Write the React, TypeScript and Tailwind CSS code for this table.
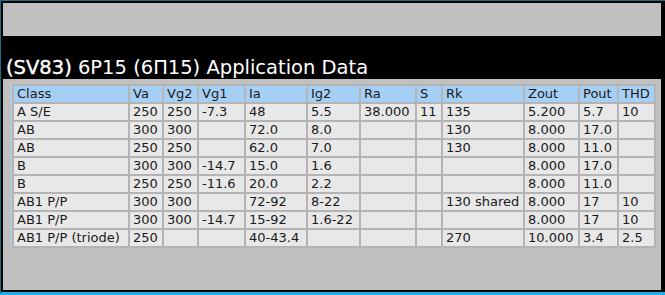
const rows: string[][] = [
  ["A S/E", "250", "250", "-7.3", "48", "5.5", "38.000", "11", "135", "5.200", "5.7", "10"],
  ["AB", "300", "300", "", "72.0", "8.0", "", "", "130", "8.000", "17.0", ""],
  ["AB", "250", "250", "", "62.0", "7.0", "", "", "130", "8.000", "11.0", ""],
  ["B", "300", "300", "-14.7", "15.0", "1.6", "", "", "", "8.000", "17.0", ""],
  ["B", "250", "250", "-11.6", "20.0", "2.2", "", "", "", "8.000", "11.0", ""],
  ["AB1 P/P", "300", "300", "", "72-92", "8-22", "", "", "130 shared", "8.000", "17", "10"],
  ["AB1 P/P", "300", "300", "-14.7", "15-92", "1.6-22", "", "", "", "8.000", "17", "10"],
  ["AB1 P/P (triode)", "250", "", "", "40-43.4", "", "", "", "270", "10.000", "3.4", "2.5"],
];

const headers = ["Class", "Va", "Vg2", "Vg1", "Ia", "Ig2", "Ra", "S", "Rk", "Zout", "Pout", "THD"];
const widths = ["w-[114px]", "w-[32px]", "w-[33px]", "w-[45px]", "w-[60px]", "w-[51px]", "w-[54px]", "w-[24px]", "w-[80px]", "w-[53px]", "w-[37px]", "w-[35px]"];

export default function App() {
  return (
    <div className="w-[665px] h-[295px] bg-black border-l border-t border-b-[3px] border-l-[#1b6c86] border-t-[#1b6c86] border-b-[#1cb0e4] pt-[2px] pl-[2px] pr-[4px] pb-[2px] font-['DejaVu_Sans',sans-serif]">
      <div className="h-full bg-[#c0c0c0] flex flex-col">
        <div className="h-[33px]" />
        <div className="h-[43px] bg-black text-white text-[19.5px] leading-none flex items-end pl-[3px] pb-[2px] whitespace-nowrap">
          <span className="[-webkit-text-stroke:0.4px_white]">(SV83)</span>
          <span>&nbsp;6P15 (6П15) Application Data</span>
        </div>
        <div className="pl-[8px] pt-[5px]">
          <table className="border-separate border-spacing-[2px] bg-[#b4b4b4] border-l border-l-[#a9d2f2] text-[13px] leading-[16px] text-[#1a1a1a] table-fixed">
            <thead>
              <tr>
                {headers.map((h, i) => (
                  <td key={h} className={`${widths[i]} h-[16px] bg-[#a6cff5] px-[3px] font-normal text-left whitespace-nowrap`}>
                    {h}
                  </td>
                ))}
              </tr>
            </thead>
            <tbody>
              {rows.map((r, ri) => (
                <tr key={ri}>
                  {r.map((c, ci) => (
                    <td key={ci} className="h-[16px] bg-[#e8e8e8] px-[3px] whitespace-nowrap">
                      {c}
                    </td>
                  ))}
                </tr>
              ))}
            </tbody>
          </table>
        </div>
      </div>
    </div>
  );
}
